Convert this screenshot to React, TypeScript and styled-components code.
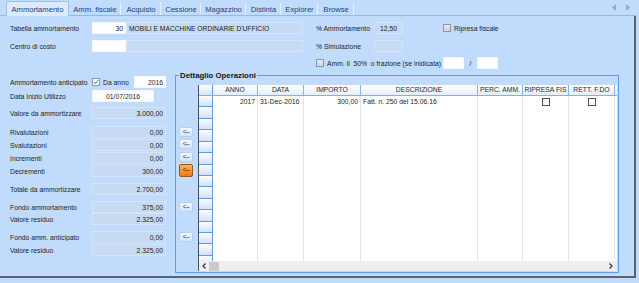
import React from 'react';
import styled, { createGlobalStyle } from 'styled-components';

const BG = '#c1dbfc';

const GlobalStyle = createGlobalStyle`
  html, body { margin: 0; padding: 0; background: ${BG}; }
  body { font-family: 'Liberation Sans', Arial, sans-serif; }
`;

const TABS: [string, number][] = [
  ['Ammortamento', 63],
  ['Amm. fiscale', 52],
  ['Acquisto', 40],
  ['Cessione', 40],
  ['Magazzino', 45],
  ['Distinta', 35],
  ['Explorer', 37],
  ['Browse', 36]
];

const COLS = [
  { title: 'ANNO', w: 45 },
  { title: 'DATA', w: 46 },
  { title: 'IMPORTO', w: 57 },
  { title: 'DESCRIZIONE', w: 117 },
  { title: 'PERC. AMM.', w: 45 },
  { title: 'RIPRESA FIS', w: 46 },
  { title: 'RETT. F.DO', w: 46 }
];

const VALUE_ROWS = [
  { label: 'Valore da ammortizzare', value: '3.000,00', mt: 5 },
  { label: 'Rivalutazioni', value: '0,00', mt: 7 },
  { label: 'Svalutazioni', value: '0,00', mt: 1 },
  { label: 'Incrementi', value: '0,00', mt: 1 },
  { label: 'Decrementi', value: '300,00', mt: 1 },
  { label: 'Totale da ammortizzare', value: '2.700,00', mt: 6 },
  { label: 'Fondo ammortamento', value: '375,00', mt: 6 },
  { label: 'Valore residuo', value: '2.325,00', mt: 0 },
  { label: 'Fondo amm. anticipato', value: '0,00', mt: 6 },
  { label: 'Valore residuo', value: '2.325,00', mt: 1 }
];

const ARROWS = [
  { mt: 42 },
  { mt: 2 },
  { mt: 3 },
  { mt: 2, active: true },
  { mt: 25 },
  { mt: 20 }
];

const App = () => {
  const emptyRows = Array.from(Array(14).keys());
  return (
    <>
      <GlobalStyle />
      <Window>
        <TabStrip>
          {TABS.map(([name, w], i) => (
            <Tab key={name} $w={w} $active={i === 0}>{name}</Tab>
          ))}
          <TabArrows>
            <svg width="4" height="7" viewBox="0 0 4 7"><path d="M4 0 L0 3.5 L4 7 Z" fill="#9aa9bb" /></svg>
            <svg width="4" height="7" viewBox="0 0 4 7"><path d="M0 0 L4 3.5 L0 7 Z" fill="#9aa9bb" /></svg>
          </TabArrows>
        </TabStrip>
        <Page>
          <TopSection>
            <TopLeft>
              <Row>
                <Label>Tabella ammortamento</Label>
                <WhiteField $w={34} $align="flex-end">30</WhiteField>
                <ReadField $w={177} $align="flex-start" $caps>MOBILI E MACCHINE ORDINARIE D'UFFICIO</ReadField>
              </Row>
              <Row $mt={6}>
                <Label>Centro di costo</Label>
                <WhiteField $w={34} $align="flex-end" />
                <ReadField $w={177} $align="flex-start" />
              </Row>
            </TopLeft>
            <TopRight>
              <Row>
                <Label $w={58}>% Ammortamento</Label>
                <ReadField $w={29} $align="center">12,50</ReadField>
                <Check $disabled style={{ marginLeft: 40 }} />
                <CheckText>Ripresa fiscale</CheckText>
              </Row>
              <Row $mt={6}>
                <Label $w={58}>% Simulazione</Label>
                <ReadField $w={29} $align="center" />
              </Row>
              <Row $mt={5}>
                <Check $disabled />
                <CheckText $w={116}>Amm. il  50%  o frazione (se inidicata)</CheckText>
                <WhiteField $w={21} $align="center" />
                <Slash>/</Slash>
                <WhiteField $w={21} $align="center" />
              </Row>
            </TopRight>
          </TopSection>

          <Lower>
            <LowerLeft>
              <Row $mt={2}>
                <Label>Ammortamento anticipato</Label>
                <Check>
                  <svg width="6" height="6" viewBox="0 0 6 6">
                    <path d="M0.8 3 L2.3 4.6 L5.2 1" stroke="#4b6ea3" strokeWidth="1" fill="none" />
                  </svg>
                </Check>
                <CheckText $w={31}>Da anno</CheckText>
                <WhiteField $w={32} $align="flex-end">2016</WhiteField>
              </Row>
              <Row $mt={2}>
                <Label>Data Inizio Utilizzo</Label>
                <WhiteField $w={62} $align="center">01/07/2016</WhiteField>
              </Row>
              {VALUE_ROWS.map((r, i) => (
                <Row $mt={r.mt} key={i}>
                  <Label>{r.label}</Label>
                  <ReadField $w={74} $align="flex-end">{r.value}</ReadField>
                </Row>
              ))}
            </LowerLeft>

            <GroupBox>
              <GroupTitle>Dettaglio Operazioni</GroupTitle>
              <ButtonCol>
                {ARROWS.map((a, i) => (
                  <ArrowButton key={i} $mt={a.mt} $active={a.active}>&lt;--</ArrowButton>
                ))}
              </ButtonCol>
              <Grid>
                <GridHeader>
                  <Corner />
                  {COLS.map(c => (
                    <HeaderCell key={c.title} $w={c.w}>{c.title}</HeaderCell>
                  ))}
                </GridHeader>
                <GridBody>
                  <GridRow>
                    <RowHead />
                    <Cell $w={45} $align="flex-end">2017</Cell>
                    <Cell $w={46} $align="flex-start">31-Dec-2016</Cell>
                    <Cell $w={57} $align="flex-end">300,00</Cell>
                    <Cell $w={117} $align="flex-start">Fatt. n. 250 del 15.06.16</Cell>
                    <Cell $w={45} $align="flex-end" />
                    <Cell $w={46} $align="center"><Check $dark /></Cell>
                    <Cell $w={46} $align="center"><Check $dark /></Cell>
                  </GridRow>
                  {emptyRows.map(r => (
                    <GridRow key={r}>
                      <RowHead />
                      {COLS.map(c => <Cell key={c.title} $w={c.w} $align="flex-start" />)}
                    </GridRow>
                  ))}
                </GridBody>
                <ScrollBar>
                  <svg width="4" height="6" viewBox="0 0 4 6" style={{ marginLeft: 3 }}>
                    <path d="M3.5 0.5 L1 3 L3.5 5.5" stroke="#333" strokeWidth="1.2" fill="none" />
                  </svg>
                  <Thumb />
                  <svg width="4" height="6" viewBox="0 0 4 6" style={{ marginLeft: 'auto', marginRight: 4 }}>
                    <path d="M0.5 0.5 L3 3 L0.5 5.5" stroke="#333" strokeWidth="1.2" fill="none" />
                  </svg>
                </ScrollBar>
              </Grid>
            </GroupBox>
          </Lower>
        </Page>
      </Window>
    </>
  );
};

const Window = styled.div`
  width: 639px;
  height: 283px;
  background: ${BG};
  display: flex;
  flex-direction: column;
  overflow: hidden;
  color: #1e1e1e;
  font-size: 6.8px;
`;

const TabStrip = styled.div`
  width: 636px;
  height: 16px;
  box-sizing: border-box;
  display: flex;
  align-items: flex-end;
  padding: 0 6px 0 6px;
  border-bottom: 1px solid #8fb9f0;
`;

const Tab = styled.div<{ $w: number; $active?: boolean }>`
  width: ${({ $w }) => $w}px;
  height: ${({ $active }) => ($active ? 15 : 13)}px;
  margin-bottom: ${({ $active }) => ($active ? -1 : 0)}px;
  box-sizing: border-box;
  display: flex;
  align-items: center;
  justify-content: center;
  font-size: 7.6px;
  color: #1d3d80;
  background: ${({ $active }) => ($active ? '#dbeafd' : BG)};
  border: 1px solid ${({ $active }) => ($active ? '#9ec2ef' : 'transparent')};
  border-right-color: ${({ $active }) => ($active ? '#9ec2ef' : '#e4eefc')};
  border-bottom: none;
  white-space: nowrap;
`;

const TabArrows = styled.div`
  margin-left: auto;
  height: 16px;
  display: flex;
  align-items: center;
  gap: 10px;
`;

const Page = styled.div`
  width: 636px;
  height: 262px;
  box-sizing: border-box;
  border-right: 2px solid #5d636e;
  border-bottom: 2px solid #5d636e;
  padding: 6px 0 0 10px;
  display: flex;
  flex-direction: column;
`;

const TopSection = styled.div`
  display: flex;
  height: 47px;
`;

const TopLeft = styled.div`
  width: 306px;
  display: flex;
  flex-direction: column;
`;

const TopRight = styled.div`
  display: flex;
  flex-direction: column;
`;

const Row = styled.div<{ $mt?: number }>`
  display: flex;
  align-items: center;
  height: 12px;
  flex: none;
  margin-top: ${({ $mt }) => $mt || 0}px;
`;

const Label = styled.div<{ $w?: number }>`
  width: ${({ $w }) => $w || 82}px;
  flex: none;
  white-space: nowrap;
  overflow: hidden;
`;

const WhiteField = styled.div<{ $w: number; $align: string }>`
  width: ${({ $w }) => $w}px;
  height: 12px;
  flex: none;
  box-sizing: border-box;
  background: #fff;
  border: 1px solid #f4f8fe;
  display: flex;
  align-items: center;
  justify-content: ${({ $align }) => $align};
  padding: 0 2px;
  white-space: nowrap;
`;

const ReadField = styled.div<{ $w: number; $align: string; $caps?: boolean }>`
  width: ${({ $w }) => $w}px;
  height: 12px;
  flex: none;
  box-sizing: border-box;
  background: #c6daf2;
  border: 1px solid #d4e3f7;
  display: flex;
  align-items: center;
  justify-content: ${({ $align }) => $align};
  padding: 0 2px;
  white-space: nowrap;
  overflow: hidden;
  font-size: ${({ $caps }) => ($caps ? '6.7px' : 'inherit')};
`;

const Check = styled.span<{ $disabled?: boolean; $dark?: boolean }>`
  width: 8px;
  height: 8px;
  flex: none;
  box-sizing: border-box;
  border: 1px solid ${({ $dark }) => ($dark ? '#505050' : '#8a97a8')};
  background: ${({ $disabled }) => ($disabled ? 'linear-gradient(#e6eaf0, #cdd5df)' : '#fbfcfe')};
  display: flex;
  align-items: center;
  justify-content: center;
`;

const CheckText = styled.span<{ $w?: number }>`
  margin-left: 3px;
  white-space: pre;
  width: ${({ $w }) => ($w ? `${$w}px` : 'auto')};
  flex: none;
`;

const Slash = styled.span`
  width: 13px;
  text-align: center;
  flex: none;
`;

const Lower = styled.div`
  display: flex;
  margin-top: 5px;
`;

const LowerLeft = styled.div`
  width: 156px;
  display: flex;
  flex-direction: column;
`;

const GroupBox = styled.div`
  position: relative;
  margin: 1px 0 0 9px;
  width: 444px;
  height: 198px;
  box-sizing: border-box;
  border: 1px solid #5f9cf0;
  padding: 9px 1px 1px 3px;
  display: flex;
`;

const GroupTitle = styled.div`
  position: absolute;
  top: -5px;
  left: 3px;
  padding: 0 1px;
  background: ${BG};
  font-weight: bold;
  font-size: 7.8px;
  line-height: 9px;
  color: #151515;
`;

const ButtonCol = styled.div`
  width: 14px;
  display: flex;
  flex-direction: column;
`;

const ArrowButton = styled.div<{ $mt: number; $active?: boolean }>`
  margin-top: ${({ $mt }) => $mt}px;
  height: ${({ $active }) => ($active ? 13 : 10)}px;
  box-sizing: border-box;
  border-radius: 2px;
  border: 1px solid ${({ $active }) => ($active ? '#9a5a1c' : '#b9d0ef')};
  background: ${({ $active }) =>
    $active ? 'linear-gradient(#ffb056, #f07a12)' : 'linear-gradient(#f3f8ff, #d3e4fb)'};
  color: ${({ $active }) => ($active ? '#4a2200' : '#2f3d52')};
  font-size: 6.6px;
  display: flex;
  align-items: center;
  justify-content: center;
  letter-spacing: -0.6px;
  line-height: 1;
`;

const Grid = styled.div`
  margin-left: 5px;
  width: 419px;
  height: 186px;
  box-sizing: border-box;
  border-left: 1px solid #4b4f57;
  background: #fff;
  display: flex;
  flex-direction: column;
  overflow: hidden;
`;

const GridHeader = styled.div`
  display: flex;
  height: 11px;
  flex: none;
  box-sizing: border-box;
  border-bottom: 1px solid #7fb0f2;
  background: linear-gradient(#ffffff, #e4eefc);
`;

const Corner = styled.div`
  width: 14px;
  flex: none;
  box-sizing: border-box;
  border-right: 1px solid #5f9ae9;
  background: linear-gradient(#fdfeff, #d3e4fb);
`;

const HeaderCell = styled.div<{ $w: number }>`
  width: ${({ $w }) => $w}px;
  flex: none;
  box-sizing: border-box;
  border-right: 1px solid #86b3f0;
  text-align: center;
  line-height: 10px;
  white-space: nowrap;
  overflow: hidden;
  color: #2a2a2a;
`;

const GridBody = styled.div`
  flex: 1;
  overflow: hidden;
  display: flex;
  flex-direction: column;
`;

const GridRow = styled.div`
  display: flex;
  height: 11.43px;
  flex: none;
`;

const RowHead = styled.div`
  width: 14px;
  flex: none;
  box-sizing: border-box;
  border-right: 1px solid #5f9ae9;
  border-bottom: 1px solid #5f9ae9;
  background: linear-gradient(#fdfeff, #cfe1fa);
`;

const Cell = styled.div<{ $w: number; $align: string }>`
  width: ${({ $w }) => $w}px;
  flex: none;
  box-sizing: border-box;
  border-right: 1px solid #e6e6e6;
  display: flex;
  align-items: center;
  justify-content: ${({ $align }) => $align};
  padding: 0 2px;
  white-space: nowrap;
  overflow: hidden;
`;

const ScrollBar = styled.div`
  height: 10px;
  flex: none;
  background: #eeeeee;
  display: flex;
  align-items: center;
`;

const Thumb = styled.div`
  width: 10px;
  height: 9px;
  margin-left: 3px;
  background: #cbcbcb;
`;

export default App;
